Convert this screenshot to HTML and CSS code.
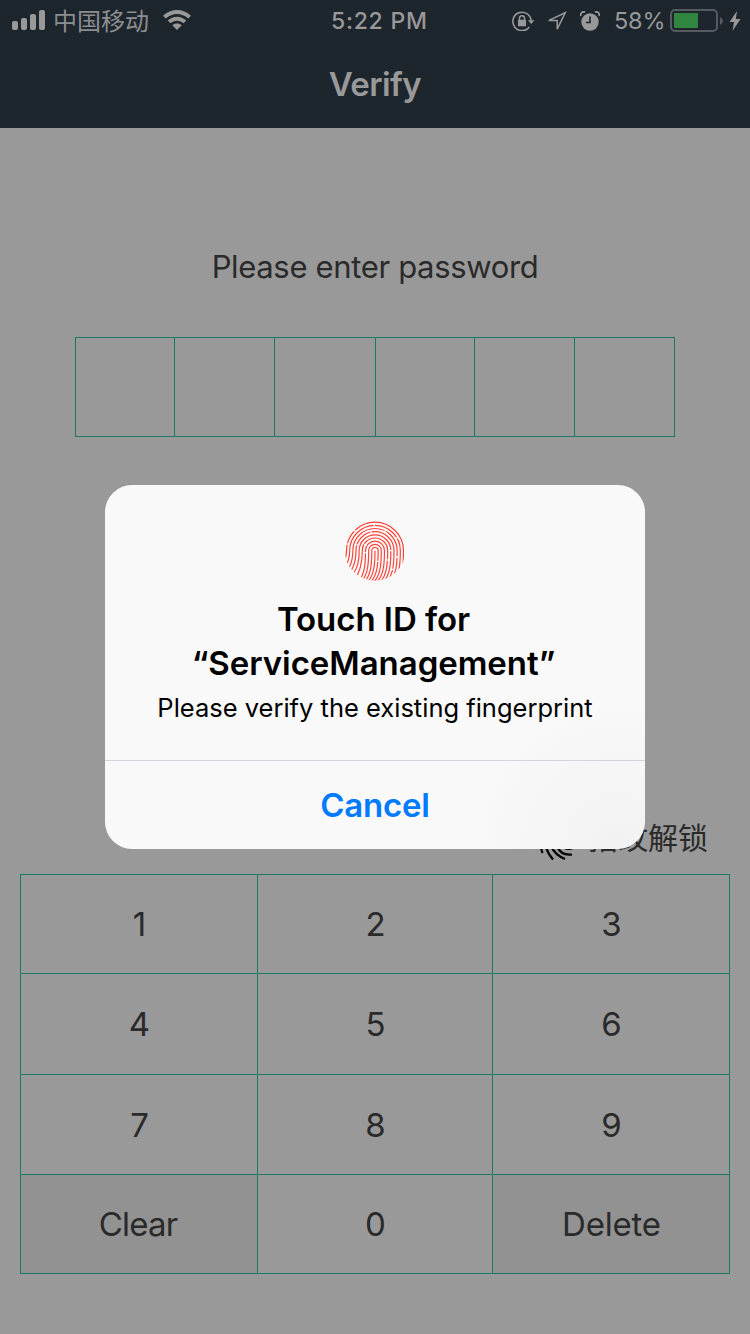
FILE: index.html
```html
<!DOCTYPE html>
<html lang="en">
<head>
<meta charset="utf-8">
<title>Verify</title>
<link rel="stylesheet" href="styles.css">
</head>
<body>
<div class="screen">
  <header class="header">
    <div class="status">
      <div class="status-left">
        <svg class="signal" width="33" height="20" viewBox="0 0 33 20"><rect x="0" y="11" width="6" height="9" rx="2"/><rect x="9" y="8" width="6" height="12" rx="2"/><rect x="18" y="4" width="6" height="16" rx="2"/><rect x="27" y="0" width="6" height="20" rx="2"/></svg>
        <span class="carrier">中国移动</span>
        <svg class="wifi" width="28" height="20" viewBox="0 0 28 20"><path d="M0 5.8C8-1.900 20-1.900 28 5.800L25.200 8.600C18.700 2.600 9.300 2.600 2.800 8.600ZM4.700 10.600C10 5.500 18 5.500 23.300 10.600L20.500 13.300C16.800 9.900 11.200 9.900 7.500 13.300ZM9.300 15.200C12 12.800 16 12.800 18.700 15.200L14 20Z"/></svg>
      </div>
      <div class="time">5:22 PM</div>
      <div class="status-right">
        <svg class="lock" width="23" height="20" viewBox="0 0 23 20"><path d="M17.300 16.100A9.200 9.200 0 1 1 19.200 9.500" fill="none" stroke="#999" stroke-width="1.6"/><path d="M16 9.200H22.500L19.200 13ZM6 8.800H14V15.200H6Z"/><path d="M7.500 9V7.200a2.500 2.500 0 0 1 5 0V9" fill="none" stroke="#999" stroke-width="1.5"/></svg>
        <svg class="arrow" width="20" height="20" viewBox="0 0 20 20"><path d="M18.200 1.800L1.800 9.400H10.200V18.200Z" fill="none" stroke="#999" stroke-width="1.5"/></svg>
        <svg class="alarm" width="20" height="20" viewBox="0 0 20 20"><circle cx="10" cy="11" r="8.7"/><path d="M.8 5C.2 2 2.400.2 5.200 1M19.200 5C19.800 2 17.600.2 14.800 1" fill="none" stroke="#999" stroke-width="1.7"/><path d="M10 5.500V11.500H6" fill="none" stroke="#1d252d" stroke-width="1.6"/></svg>
        <span class="percent">58%</span>
        <svg class="battery" width="53" height="24" viewBox="0 0 53 24"><rect x="1" y="1" width="46" height="21" rx="4" fill="none" stroke="#555b61" stroke-width="2"/><rect x="4" y="4" width="24" height="15" rx="1" fill="#31863f"/><path d="M50 8Q53 9.500 53 12T50 16Z" fill="#555b61"/></svg>
        <svg class="bolt" width="12" height="20" viewBox="0 0 12 20"><path d="M8 0L.5 11H5L3.500 20L11.500 8H6.800Z"/></svg>
      </div>
    </div>
    <h1 class="title">Verify</h1>
  </header>
  <main class="content">
    <p class="prompt">Please enter password</p>
    <div class="pin"><i></i><i></i><i></i><i></i><i></i><i></i></div>
    <div class="unlock">
      <svg class="unlock-icon" width="40" height="42" viewBox="0 0 40 42"><g fill="none" stroke="#000" stroke-width="2.2"><path d="M4 28Q4.300 31 5.500 34M9 28Q11 35 16 40.500M14 27Q18 36 28 40M20 27Q24 37 35 35.500M26 26Q28 31.500 36 29M4 24V18a16 16 0 0 1 32 0V24M9 24V18a11 11 0 0 1 22 0V25M14 23V18a6 6 0 0 1 12 0V24M20 17V23"/></g></svg>
      <span class="unlock-text">指纹解锁</span>
    </div>
    <div class="keypad">
      <span class="key">1</span><span class="key">2</span><span class="key">3</span>
      <span class="key">4</span><span class="key">5</span><span class="key">6</span>
      <span class="key">7</span><span class="key">8</span><span class="key">9</span>
      <span class="key action clear">Clear</span><span class="key">0</span><span class="key action">Delete</span>
    </div>
  </main>
  <div class="overlay">
    <section class="dialog">
      <div class="dialog-body">
        <svg class="touch" width="62" height="62" viewBox="27 32 186 186">
          <defs><clipPath id="disc"><circle cx="120" cy="123" r="91"/></clipPath></defs>
          <g clip-path="url(#disc)" fill="none">
            <g stroke="#ff4338" stroke-width="3.5">
              <path d="M97 220c17-20 23-42 23-96"/>
              <path d="M87.500 220c17-20 23-42 23-96a9.500 9.500 0 0 1 19 0c0 54-6 76-23 96"/>
              <path d="M78 220c17-20 23-42 23-96a19 19 0 0 1 38 0c0 54-6 76-23 96"/>
              <path d="M68.500 220c17-20 23-42 23-96a28.500 28.500 0 0 1 57 0c0 54-6 76-23 96"/>
              <path d="M52 220c24-28 30-58 30-96a38 38 0 0 1 76 0c0 54-6 76-23 96"/>
              <path d="M36.500 220c28-32 36-58 36-96a47.500 47.500 0 0 1 95 0c0 54-6 76-23 96"/>
              <path d="M21 220c32-36 42-58 42-96a57 57 0 0 1 114 0c0 54-6 76-23 96"/>
              <path d="M7.500 220c36-40 46-58 46-96a66.500 66.500 0 0 1 133 0c0 54-6 76-23 96"/>
              <path d="M-4 214c38-42 48-58 48-90a76 76 0 0 1 152 0c0 54-6 76-23 96"/>
              <path d="M-15 208c40-42 49.500-56 49.500-84a85.500 85.500 0 0 1 171 0c0 54-6 76-23 96"/>
            </g>
            <path d="M118 43v10M30 104h9M55 60l7 7M108 62v10M86 130h9M59 106h9M163 124h9M183 143h9M126 156h9M154 152h9M88 104l7 5M152 62l-5 8M188 84l-8 5M170 180h9" stroke="#f9f9f9" stroke-width="4"/>
          </g>
        </svg>
        <h2 class="dialog-title">Touch ID for<br>“ServiceManagement”</h2>
        <p class="message">Please verify the existing fingerprint</p>
      </div>
      <div class="cancel">Cancel</div>
    </section>
  </div>
</div>
</body>
</html>
```

FILE: styles.css
```css
* { box-sizing: border-box; margin: 0; padding: 0; }
body { font-family: Inter, "Noto Sans CJK SC", sans-serif; background: #999; }
.screen { position: relative; width: 750px; height: 1334px; overflow: hidden; background: #999; color: #2a2a2a; }
.header { height: 128px; background: #1d252d; color: #999; }
.status { display: grid; grid-template-columns: 1fr 100px 1fr; grid-template-rows: 40px; height: 40px; align-items: start; }
.status svg { display: block; fill: #999; flex: none; }
.status-left, .status-right { display: flex; align-items: center; height: 40px; }
.status-left { padding-left: 12px; }
.carrier { margin-left: 8px; width: 96px; font: 400 24px/38px "Noto Sans CJK SC", sans-serif; color: #8c8e90; white-space: nowrap; }
.wifi { margin-left: 14px; }
.time { font-size: 23px; font-weight: 500; line-height: 40px; letter-spacing: .75px; white-space: nowrap; text-align: center; padding: 1px 0 0 6px; }
.status-right { height: 42px; justify-content: flex-end; padding-right: 9px; }
.arrow { margin-left: 12px; }
.alarm { margin-left: 13px; }
.percent { margin-left: 14px; width: 49px; font-size: 23.5px; line-height: 40px; letter-spacing: -.2px; white-space: nowrap; }
.battery { margin-left: 7px; }
.bolt { margin-left: 6px; }
.title { font-size: 33px; font-weight: 600; line-height: 40px; letter-spacing: -.6px; text-align: center; padding-top: 24px; }
.content { display: flex; flex-direction: column; }
.prompt { margin-top: 119px; font-size: 31px; line-height: 40px; letter-spacing: -.34px; text-align: center; }
.pin { display: grid; grid-template-columns: 99px 100px 101px 99px 100px 100px; width: 600px; height: 100px; margin: 50px 0 0 75px; border: solid #1a7b64; border-width: 1px 0 1px 1px; }
.pin i { border-right: 1px solid #1a7b64; }
.unlock { display: flex; justify-content: flex-end; align-items: center; height: 42px; margin-top: 382px; padding-right: 42px; font: 400 30px/34px "Noto Sans CJK SC", sans-serif; }
.unlock-text { padding-bottom: 8px; }
.unlock-icon { margin-right: 11px; }
.keypad { display: grid; grid-template-columns: 237px 235px 237px; grid-template-rows: 99px 101px 100px 99px; width: 710px; height: 400px; margin: 13px 0 0 20px; border: solid #1a7b64; border-width: 1px 0 0 1px; }
.key { display: flex; align-items: center; justify-content: center; padding-left: 1px; font-size: 33px; border: solid #1a7b64; border-width: 0 1px 1px 0; }
.action { background: #929292; letter-spacing: -.2px; }
.clear { letter-spacing: -.8px; padding-right: 3px; }
.overlay { position: absolute; inset: 0; display: flex; align-items: center; justify-content: center; }
.dialog { width: 540px; height: 364px; border-radius: 27px; overflow: hidden; background: radial-gradient(circle at 95% 100%, #f2f2f2 0, #f9f9f9 150px); color: #000; text-align: center; }
.dialog-body { height: 276px; padding-top: 35px; border-bottom: 1px solid #d2d6db; }
.touch { display: block; margin: 0 auto; }
.dialog-title { margin-top: 15px; padding-right: 3px; font-size: 33px; font-weight: 600; line-height: 44px; letter-spacing: -.05px; white-space: nowrap; }
.message { margin-top: 5px; font-size: 25.5px; line-height: 36px; white-space: nowrap; }
.cancel { font-size: 33px; font-weight: 600; line-height: 88px; letter-spacing: -.2px; color: #007aff; }
```
